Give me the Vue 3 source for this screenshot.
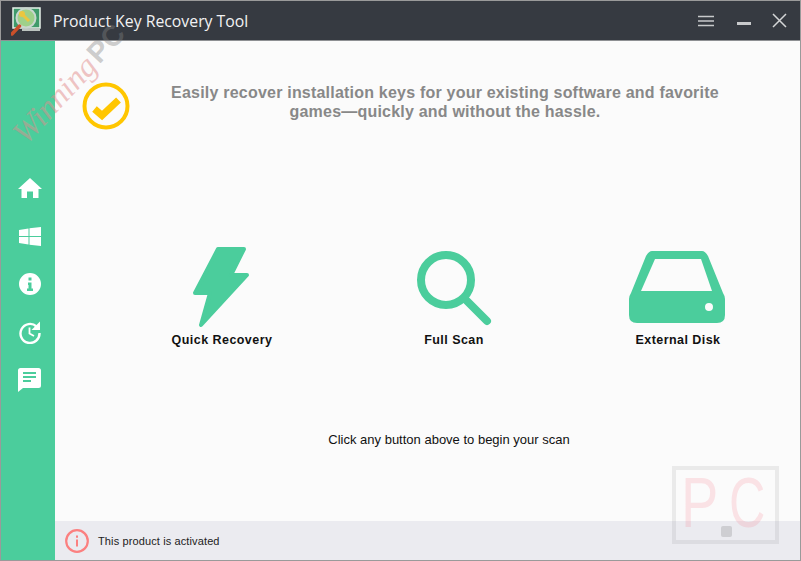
<script setup>
const navItems = [
  { name: 'home', paths: ['M12 2 0 13h3.500v9H9v-6.500h6V22h5.500v-9H24z'] },
  { name: 'windows', paths: ['M1 6l9.500-1.500V12H1zM11.500 4.300 23 3v9H11.500zM1 13h9.500v7.500L1 19zM11.500 13H23v9l-11.500-1.300z'] },
  { name: 'info', paths: ['M12 1a11 11 0 1 0 0 22 11 11 0 0 0 0-22zM10.500 5.500h3v3h-3zM10 10.500h3.500v6H15V19H9v-2.500h1.500V13H10z'] },
  {
    name: 'history',
    paths: ['M22 1.500V10h-8.500z'],
    strokes: [
      { d: 'M18.500 6.500A9.500 9.500 0 1 0 21.500 13', width: 2.4 },
      { d: 'M11.500 7.500v6l4.500 2.500', width: 1.8 },
    ],
  },
  { name: 'chat', paths: ['M2.500 0h18A2.500 2.500 0 0 1 23 2.500v15a2.500 2.500 0 0 1-2.500 2.500H5l-5 4V2.500A2.500 2.500 0 0 1 2.500 0zM5 4v2h13V4zm0 4v2h13V8zm0 4v2h8v-2z'] },
]

const scans = [
  { label: 'Quick Recovery', kind: 'bolt' },
  { label: 'Full Scan', kind: 'search' },
  { label: 'External Disk', kind: 'disk' },
]
</script>

<template>
  <div class="window">
    <header class="titlebar">
      <svg class="logo" width="32" height="30" viewBox="0 0 32 30">
        <rect x="2" y="2" width="27" height="20" fill="#3f9a6a" stroke="#e8f2ea" stroke-width="1.500" />
        <path d="M11 24h18" stroke="#e8f2ea" stroke-width="1.500" />
        <circle cx="15" cy="12" r="9.500" fill="#9fd08a" stroke="#c9d6cf" stroke-width="2" />
        <path d="M11 8l7 7" stroke="#ecc63f" stroke-width="3" />
        <circle cx="11" cy="8" r="3" fill="#ecc63f" />
        <path d="M8.500 20 1 28" stroke="#c9502a" stroke-width="3.500" stroke-linecap="round" />
      </svg>
      <span class="app-title">Product Key Recovery Tool</span>
      <div class="controls">
        <svg class="menu-icon" width="16" height="12" viewBox="0 0 16 12">
          <path d="M0 1.500h16M0 6h16M0 10.500h16" stroke="#c8c9cb" stroke-width="1.400" />
        </svg>
        <svg width="14" height="12" viewBox="0 0 14 12">
          <path d="M0 8.500h14" stroke="#c8c9cb" stroke-width="3" />
        </svg>
        <svg width="15" height="15" viewBox="0 0 15 15">
          <path d="M1 1l13 13M14 1 1 14" stroke="#d4d5d6" stroke-width="1.500" />
        </svg>
      </div>
    </header>

    <div class="body">
      <nav class="sidebar">
        <div v-for="item in navItems" :key="item.name" class="nav-item">
          <svg width="24" height="24" viewBox="0 0 24 24">
            <path v-for="d in item.paths" :key="d" :d="d" fill="#fff" fill-rule="evenodd" />
            <path v-for="s in item.strokes" :key="s.d" :d="s.d" fill="none" stroke="#fff" :stroke-width="s.width" />
          </svg>
        </div>
      </nav>

      <main class="main">
        <section class="intro">
          <svg class="check" width="48" height="48" viewBox="0 0 48 48">
            <circle cx="24" cy="24" r="21.500" fill="none" stroke="#ffc600" stroke-width="4" />
            <path d="M12.500 27l7.500 6.500L36.500 18" fill="none" stroke="#ffc600" stroke-width="7" />
          </svg>
          <h1 class="headline">Easily recover installation keys for your existing software and favorite games—quickly and without the hassle.</h1>
        </section>

        <section class="scans">
          <button v-for="scan in scans" :key="scan.kind" class="scan">
            <svg class="scan-icon" width="100" height="88" viewBox="0 0 100 88">
              <path v-if="scan.kind === 'bolt'" d="M47 7H73L60 33H76L30 83 39 51H24z" fill="#4bcd9c" stroke="#4bcd9c" stroke-width="4" stroke-linejoin="round" />
              <g v-else-if="scan.kind === 'search'" fill="none" stroke="#4bcd9c" stroke-width="8">
                <circle cx="43" cy="38" r="25" />
                <path d="M63 58l21 21" stroke-linecap="round" />
              </g>
              <path v-else fill="#4bcd9c" fill-rule="evenodd" d="M25 9H75Q78 9 81 14L96 51Q98 54 98 57V73Q98 81 90 81H10Q2 81 2 73V57Q2 54 4 51L19 14Q22 9 25 9zM28 17 14 49H85L74 17zM82 61a4 4 0 1 0 0 8 4 4 0 0 0 0-8z" />
            </svg>
            <span class="scan-label">{{ scan.label }}</span>
          </button>
        </section>

        <p class="hint">Click any button above to begin your scan</p>

        <footer class="status">
          <svg width="24" height="24" viewBox="0 0 24 24">
            <circle cx="12" cy="12" r="10.800" fill="none" stroke="#fb8080" stroke-width="2.200" />
            <path d="M12 6.500v2.200M12 10.500v7" stroke="#fb8080" stroke-width="2" />
          </svg>
          <span>This product is activated</span>
        </footer>
      </main>
    </div>

    <div class="mark-winning">Winning</div>
    <div class="mark-pc">PC</div>
    <div class="stamp">
      <span class="stamp-p">P</span>
      <span class="stamp-c">C</span>
      <i class="stamp-dot"></i>
    </div>
  </div>
</template>

<style>
html, body {
  margin: 0;
  background: #fbfbfb;
}
</style>

<style scoped>
.window {
  position: relative;
  width: 801px;
  height: 561px;
  box-sizing: border-box;
  border: 1px solid #9a9a9a;
  display: flex;
  flex-direction: column;
  overflow: hidden;
  font-family: "Liberation Sans", Arial, sans-serif;
}
.titlebar {
  height: 39px;
  flex: none;
  background: #363a41;
  display: flex;
  align-items: center;
  padding-left: 10px;
  padding-right: 13px;
  border-bottom: 1px solid #8e9093;
}
.logo {
  margin-right: 10px;
}
.app-title {
  color: #f2f2f3;
  font-family: "Open Sans", sans-serif;
  font-size: 15.8px;
}
.controls {
  margin-left: auto;
  display: flex;
  align-items: center;
  gap: 21px;
}
.menu-icon {
  margin-right: 2px;
}
.body {
  flex: 1;
  display: flex;
  min-height: 0;
}
.sidebar {
  width: 54px;
  flex: none;
  background: #4bcd9c;
  padding-top: 123px;
  box-sizing: border-box;
}
.nav-item {
  height: 48px;
  display: flex;
  align-items: center;
  justify-content: center;
  padding-left: 4px;
}
.main {
  flex: 1;
  display: flex;
  flex-direction: column;
  background: #fbfbfb;
}
.intro {
  display: flex;
  height: 201px;
  box-sizing: border-box;
  padding-top: 41px;
  padding-left: 27px;
}
.check {
  flex: none;
}
.headline {
  margin: 1px 0 0 20px;
  width: 590px;
  text-align: center;
  color: #888;
  font-size: 16px;
  line-height: 19px;
  font-weight: 700;
  letter-spacing: 0.21px;
}
.scans {
  display: grid;
  grid-template-columns: 232px 232px 216px;
  padding-left: 50px;
}
.scan {
  border: 0;
  background: none;
  padding: 0;
  display: flex;
  flex-direction: column;
  align-items: center;
  font-family: inherit;
}
.scan-icon {
  display: block;
}
.scan-label {
  font-size: 12.5px;
  font-weight: 700;
  letter-spacing: 0.45px;
  color: #111;
  margin-top: 3px;
  margin-left: 2px;
}
.hint {
  margin: 85px 0 0;
  text-align: center;
  padding-left: 43px;
  font-size: 13px;
  color: #111;
  line-height: 16px;
}
.status {
  margin-top: auto;
  height: 39px;
  background: #ebebf0;
  display: flex;
  align-items: center;
  gap: 9px;
  padding-left: 10px;
  font-size: 11px;
  letter-spacing: 0.12px;
  color: #222;
}
.mark-winning {
  position: absolute;
  left: 0;
  top: 82px;
  transform: rotate(-47deg);
  font-family: "Liberation Serif", serif;
  font-style: italic;
  font-size: 32px;
  line-height: 1;
  color: rgba(225, 140, 140, 0.5);
}
.mark-pc {
  position: absolute;
  left: 85px;
  top: 26px;
  transform: rotate(-47deg);
  font-size: 29px;
  font-weight: 700;
  color: rgba(130, 130, 130, 0.4);
}
.stamp {
  position: absolute;
  left: 671px;
  top: 465px;
  width: 99px;
  height: 70px;
  border: 4px solid rgba(120, 120, 120, 0.13);
}
.stamp-p,
.stamp-c {
  position: absolute;
  top: -5px;
  font-size: 70px;
  line-height: 76px;
  color: rgba(245, 90, 110, 0.15);
  transform-origin: left center;
}
.stamp-p {
  left: 5px;
  transform: scaleX(0.8);
}
.stamp-c {
  left: 53px;
  transform: scaleX(0.72);
}
.stamp-dot {
  position: absolute;
  left: 45px;
  top: 56px;
  width: 11px;
  height: 11px;
  border-radius: 2px;
  background: rgba(120, 120, 120, 0.25);
}
</style>
